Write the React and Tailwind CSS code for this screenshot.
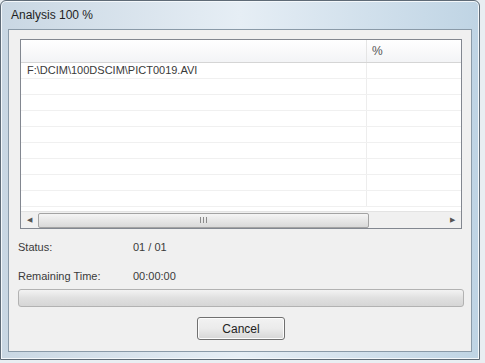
import React from "react";

const rows = Array.from({ length: 9 });

export default function App() {
  return (
    <div
      className="w-[485px] h-[363px] bg-[#e9eef2] text-[#3a3a3a] text-[11px]"
      style={{ fontFamily: '"Liberation Sans", Arial, sans-serif' }}
    >
      {/* Window frame */}
      <div className="w-[480px] h-[360px] border border-[#5f6b77] rounded-t-[6px] bg-gradient-to-r from-[#c9d7e3] via-[#e6eef5] to-[#bfd4e4] flex flex-col px-[7px] pb-[7px] shadow-[inset_0_0_0_1px_#f4f8fb]">
        {/* Title */}
        <div className="h-[28px] flex items-center pl-[3px] text-[12px] text-[#1e1e1e]">Analysis 100 %</div>

        {/* Client area */}
        <div className="flex-1 bg-[#f0f0f0] border border-[#8a9aa8] flex flex-col pl-[11px] pr-[9px] pt-[9px]">
          {/* List */}
          <div className="h-[190px] border border-[#828790] bg-white flex flex-col">
            <div className="h-[23px] flex border-b border-[#d5d5d5] bg-gradient-to-b from-white to-[#f3f4f6]">
              <div className="w-[346px] border-r border-[#e5e5e5]" />
              <div className="flex-1 pl-[5px] flex items-center text-[12px] text-[#555]">%</div>
            </div>
            <div className="flex-1 flex flex-col overflow-hidden">
              {rows.map((_, i) => (
                <div key={i} className="h-[16px] shrink-0 flex border-b border-[#f0f0f0]">
                  <div className="w-[346px] border-r border-[#ededed] pl-[6px] flex items-center">
                    {i === 0 ? "F:\\DCIM\\100DSCIM\\PICT0019.AVI" : ""}
                  </div>
                  <div className="flex-1" />
                </div>
              ))}
            </div>
            {/* Horizontal scrollbar */}
            <div className="h-[17px] bg-[#f0f0f0] border-t border-[#e3e3e3] flex items-center">
              <div className="w-[17px] flex items-center justify-center text-[#555] text-[7px]">◀</div>
              <div className="w-[331px] h-[15px] rounded-[2px] border border-[#a3a3a3] bg-gradient-to-b from-[#f5f5f5] to-[#d9d9d9] flex items-center justify-center gap-[2px]">
                <div className="w-px h-[6px] bg-[#8a8a8a]" />
                <div className="w-px h-[6px] bg-[#8a8a8a]" />
                <div className="w-px h-[6px] bg-[#8a8a8a]" />
              </div>
              <div className="flex-1" />
              <div className="w-[17px] flex items-center justify-center text-[#555] text-[7px]">▶</div>
            </div>
          </div>

          {/* Status */}
          <div className="flex h-[16px] items-center mt-[10px]">
            <div className="w-[115px] -ml-[2px]">Status:</div>
            <div>01 / 01</div>
          </div>
          <div className="flex h-[16px] items-center mt-[13px]">
            <div className="w-[115px] -ml-[2px]">Remaining Time:</div>
            <div>00:00:00</div>
          </div>

          {/* Progress */}
          <div className="mt-[5px] -mx-[2px] h-[18px] rounded-[3px] border border-[#b2b2b2] bg-gradient-to-b from-[#f3f3f3] via-[#e0e0e0] to-[#d6d6d6]" />

          {/* Button */}
          <div className="flex justify-center mt-[10px]">
            <button className="w-[88px] h-[23px] rounded-[3px] border border-[#707070] bg-gradient-to-b from-[#f2f2f2] via-[#ebebeb] to-[#d6d6d6] text-[12px] text-[#222] shadow-[inset_0_0_0_1px_#fcfcfc]">
              Cancel
            </button>
          </div>
        </div>
      </div>
    </div>
  );
}
